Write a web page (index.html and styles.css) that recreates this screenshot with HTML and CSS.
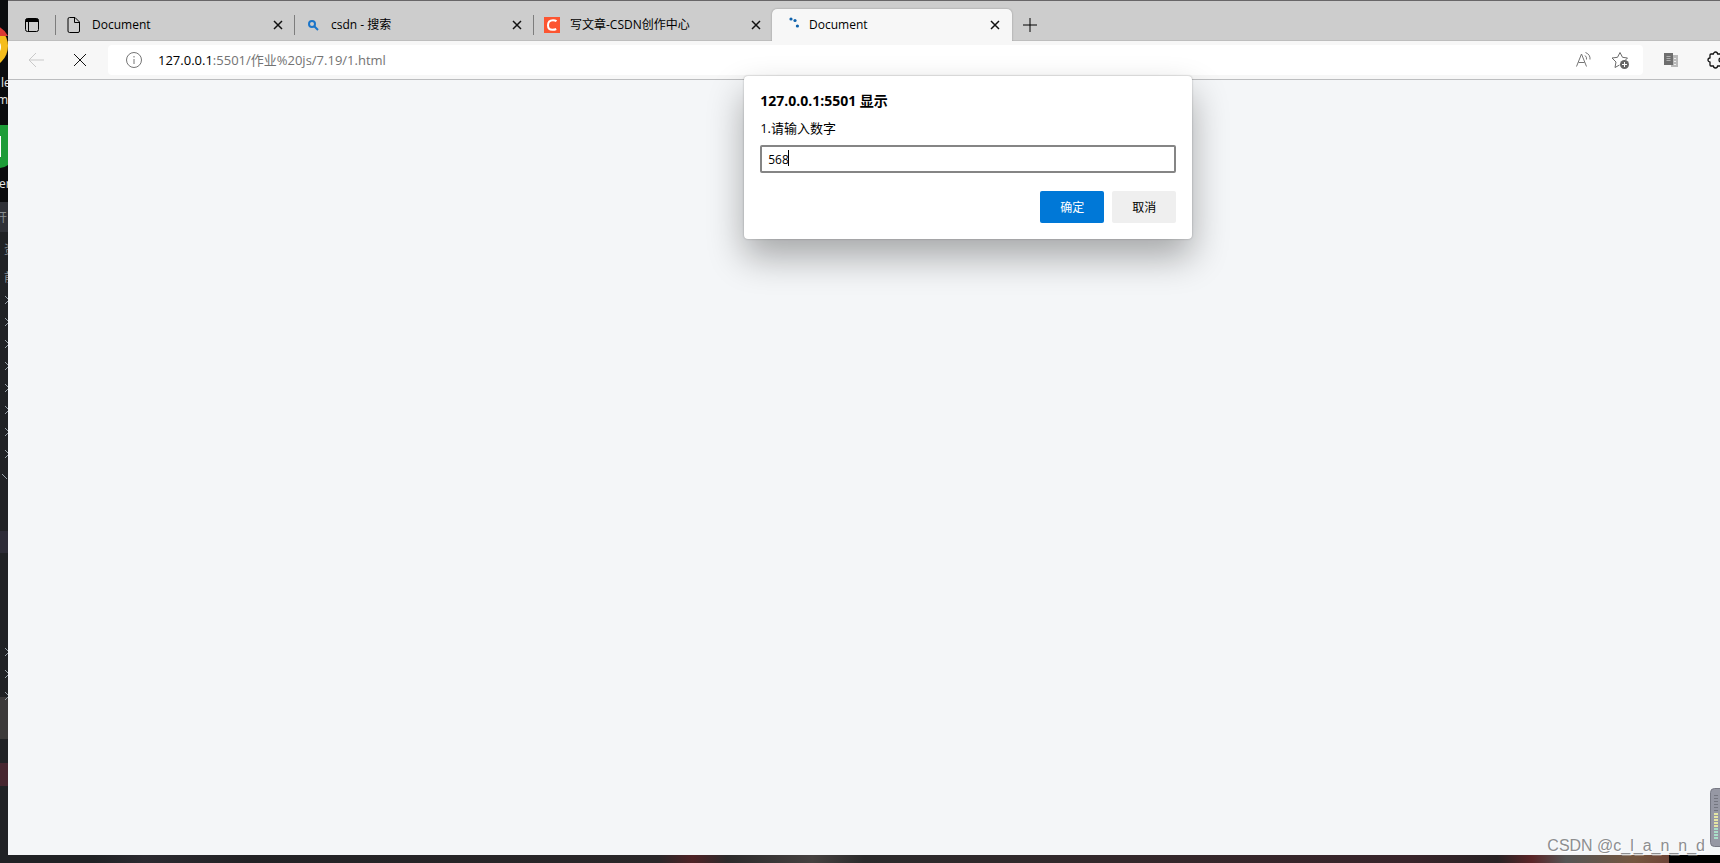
FILE: index.html
```
<!DOCTYPE html>
<html lang="zh-CN">
<head>
    <meta charset="UTF-8">
    <meta name="viewport" content="width=device-width, initial-scale=1.0">
    <title>Document</title>
    <link rel="stylesheet" href="styles.css">
</head>
<body>
    <div class="desktop">
        <svg class="desktop-left" width="8" height="863" aria-hidden="true">
            <rect width="8" height="863" fill="#0b0c0e" />
            <circle cx="-14" cy="46" r="22" fill="#f5bd1c" />
            <path d="M-14 24 A22 22 0 0 1 8 36 H-14z" fill="#dc3a34" />
            <circle cx="-8" cy="47" r="9" fill="#fff" />
            <path d="M0 125h8v40q-4 3-8 3z" fill="#1d9c38" />
            <path d="M0 136h1v21h-1z" fill="#fff" />
            <rect y="202" width="8" height="30" fill="#303238" />
            <rect y="232" width="8" height="631" fill="#202225" />
            <rect y="531" width="8" height="22" fill="#2d2c37" />
            <rect y="697" width="8" height="42" fill="#3c3a3a" />
            <rect y="763" width="8" height="23" fill="#46262f" />
            <g class="desktop-text">
                <text x="1" y="87">le</text>
                <text x="-3" y="104">me</text>
                <text x="-1" y="188">er</text>
            </g>
            <g class="desktop-text dim">
                <text x="-5" y="222">开</text>
                <text x="4" y="254">资</text>
                <text x="4" y="282">前</text>
            </g>
            <g fill="none" stroke="#9aa3ab">
                <path d="M5 296l4 4-4 4M5 318l4 4-4 4M5 340l4 4-4 4M5 362l4 4-4 4M5 384l4 4-4 4M5 406l4 4-4 4M5 428l4 4-4 4M5 450l4 4-4 4" />
                <path d="M2 474l5 5M5 648l4 4-4 4M5 670l4 4-4 4M5 692l4 4-4 4" />
            </g>
        </svg>

        <main class="window">
            <nav class="tabs" aria-label="标签页">
                <button class="tab-menu" aria-label="标签操作">
                    <svg width="16" height="16" viewBox="0 0 16 16">
                        <rect x="1.5" y="1.5" width="13" height="13" rx="2" fill="none" stroke="#000" />
                        <path d="M1.500 5V3.500a2 2 0 0 1 2-2h9a2 2 0 0 1 2 2V5z" />
                        <path d="M4.500 5v9" stroke="#000" />
                    </svg>
                </button>

                <div class="tab">
                    <span class="tab-icon">
                        <svg width="16" height="18" viewBox="0 0 16 18" fill="none" stroke="#000">
                            <path d="M3.500 1.500h5.500l4.500 4.500v9a1.500 1.500 0 0 1-1.500 1.500h-8.500a1.500 1.500 0 0 1-1.500-1.500v-12a1.500 1.500 0 0 1 1.500-1.500zM8.500 1.500v5h5" />
                        </svg>
                    </span>
                    <span class="tab-title">Document</span>
                    <button class="tab-close" aria-label="关闭标签页"><svg width="10" height="10"><path d="M1 1l8 8M9 1l-8 8" /></svg></button>
                </div>
                <div class="tab">
                    <span class="tab-icon">
                        <svg width="16" height="16" viewBox="0 0 16 16" fill="none" stroke="#1b75c9" stroke-width="2">
                            <circle cx="7" cy="7" r="3" /><path d="M9 9l4 4" />
                        </svg>
                    </span>
                    <span class="tab-title">csdn - 搜索</span>
                    <button class="tab-close" aria-label="关闭标签页"><svg width="10" height="10"><path d="M1 1l8 8M9 1l-8 8" /></svg></button>
                </div>
                <div class="tab">
                    <span class="tab-icon">
                        <svg width="16" height="16" viewBox="0 0 16 16">
                            <rect width="16" height="16" fill="#fc5531" />
                            <path d="M12.500 4.200Q11 3.200 9 3.200C6 3.200 4 5.200 4 8.200C4 11 5.700 12.800 8.400 12.800Q10.700 12.800 12.200 12" fill="none" stroke="#fff" stroke-width="2" />
                        </svg>
                    </span>
                    <span class="tab-title">写文章-CSDN创作中心</span>
                    <button class="tab-close" aria-label="关闭标签页"><svg width="10" height="10"><path d="M1 1l8 8M9 1l-8 8" /></svg></button>
                </div>
                <div class="tab active">
                    <span class="tab-icon">
                        <svg width="16" height="16" viewBox="0 0 16 16" fill="#0f62ac">
                            <circle cx="8" cy="2" r="1.600" /><circle cx="12" cy="3.500" r="1.600" /><circle cx="14.400" cy="9" r="1.600" />
                        </svg>
                    </span>
                    <span class="tab-title">Document</span>
                    <button class="tab-close" aria-label="关闭标签页"><svg width="10" height="10"><path d="M1 1l8 8M9 1l-8 8" /></svg></button>
                </div>

                <button class="tab-new" aria-label="新建标签页"><svg width="14" height="14"><path d="M7 0v14M0 7h14" stroke="#000" /></svg></button>
            </nav><!-- .tabs END -->

            <div class="toolbar">
                <button class="tool" aria-label="返回">
                    <svg width="16" height="16" fill="none" stroke="#c9c9c9"><path d="M16 8H1M8 1L1 8l7 7" /></svg>
                </button>
                <button class="tool" aria-label="停止">
                    <svg width="14" height="14" fill="none" stroke="#111"><path d="M1 1l12 12M13 1L1 13" /></svg>
                </button>
                <div class="address">
                    <svg width="18" height="18" viewBox="0 0 18 18" fill="none" stroke="#757575">
                        <circle cx="9" cy="9" r="7.500" /><path d="M9 8v5M9 5v1.500" />
                    </svg>
                    <a class="url" href="#"><span>127.0.0.1</span>:5501/作业%20js/7.19/1.html</a>
                    <button class="address-btn" aria-label="大声朗读">
                        <svg width="18" height="18" viewBox="0 0 18 18" fill="none" stroke="#757575">
                            <path d="M1.500 15.500L6.500 3l5 12.500M3.500 11.500h6" />
                            <path d="M10 4.500q2 1.500 1.500 4M10.500 1.500q5 2 4.500 7" />
                        </svg>
                    </button>
                    <button class="address-btn" aria-label="收藏">
                        <svg width="18" height="18" viewBox="0 0 18 18">
                            <path d="M8.500 14l-4.500 2.500 1-5.500-4-4 5.500-.700L9 1.500l2.500 4.800 5 .700-2 2" fill="none" stroke="#6b6b6b" stroke-linejoin="round" />
                            <circle cx="13.500" cy="13.500" r="4.500" fill="#666" />
                            <path d="M13.500 11v5M11 13.500h5" stroke="#fff" />
                        </svg>
                    </button>
                </div>
                <button class="tool" aria-label="翻译">
                    <svg width="14" height="14" viewBox="0 0 14 14">
                        <path d="M7 2h7v12H7z" fill="#b9b9b9" />
                        <path d="M10 5.500h2M10 8.500h2M10 11.500h2" stroke="#eee" />
                        <path d="M0 0h9v12H0z" fill="#6e6e6e" />
                        <path d="M2.500 3.500h4M2.500 5.500h4M2.500 7.500h4" stroke="#b0b0b0" />
                    </svg>
                </button>
                <button class="tool last" aria-label="管理扩展">
                    <svg width="18" height="18" viewBox="0 0 18 18" fill="none" stroke="#111" stroke-width="1.300" stroke-linejoin="round">
                        <path d="M4 3h2.500a2 2 0 0 1 4 0h3.500v4a2 2 0 1 0 0 4v4h-3.500a2 2 0 0 1-4 0H4a1 1 0 0 1-1-1v-3a2 2 0 0 1 0-4V4a1 1 0 0 1 1-1z" />
                    </svg>
                </button>
            </div><!-- .toolbar END -->

            <section class="page"></section>

            <form class="dialog" role="dialog">
                <h1>127.0.0.1:5501 显示</h1>
                <label for="answer">1.请输入数字</label>
                <div class="field">
                    <input id="answer" type="text" value="568">
                </div>
                <div class="buttons">
                    <button class="ok" type="button">确定</button>
                    <button type="button">取消</button>
                </div>
            </form>

            <svg class="meter" width="10" height="60" aria-hidden="true">
                <path d="M12 .500H4.500a4 4 0 0 0-4 4v50a4 4 0 0 0 4 4H12" fill="#9698a4" stroke="#777984" />
                <path d="M6 7v18" stroke="#747680" stroke-width="4" stroke-dasharray="1 2" />
                <path d="M6 25v15" stroke="#e4e5a4" stroke-width="4" stroke-dasharray="2 1" />
                <path d="M6 40v12" stroke="#a9dfc8" stroke-width="4" stroke-dasharray="2 1" />
            </svg>
            <p class="watermark">CSDN @c_l_a_n_n_d</p>
        </main><!-- .window END -->

        <div class="desktop-bottom"></div>
    </div>
</body>
</html>
```
FILE: styles.css
```
* {
    margin: 0;
    padding: 0;
    box-sizing: border-box;
}
body {
    font-family: "Open Sans", "Noto Sans CJK SC", sans-serif;
    font-size: 12px;
    color: #000;
    background-color: #202225;
}
button {
    border: none;
    background: none;
    font: inherit;
    color: inherit;
}
svg {
    display: block;
    flex: none;
}
.desktop {
    height: 100vh;
    display: grid;
    grid-template-columns: 8px minmax(0, 1fr);
    grid-template-rows: minmax(0, 1fr) 8px;
    overflow: hidden;
}
.desktop-left {
    grid-row: 1 / 3;
}
.desktop-text {
    fill: #e8e8e8;
    font-size: 12px;
}
.dim {
    fill: #8a8f94;
}
.desktop-bottom {
    background: linear-gradient(90deg, #202225 0 5%, #2b2a30 8%, #222225 14%, #2a2729 38%, #4e2225 40%, #2c2a2b 42%, #454140 47%, #2b2a2b 50%, #33282b 65%, #38242a 82%, #282224 87%, #5a2528 89%, #555 91%, #74563f 95%, #6e4538 97%, #000 97%);
}

.window {
    position: relative;
    display: flex;
    flex-direction: column;
    border-top: 1px solid #686668;
    background-color: #f4f6f8;
}

/* 标签栏 */
.tabs {
    display: flex;
    height: 40px;
    padding-top: 8px;
    background-color: #cdcdcd;
    border-bottom: 1px solid #bebebe;
}
.tab-menu {
    width: 47px;
    padding: 0 8px 0 16px;
}
.tab {
    position: relative;
    display: flex;
    align-items: center;
    width: 239px;
    padding: 0 11px;
}
.tab::before {
    /* 标签之间的分隔线 */
    content: '';
    position: absolute;
    left: 0;
    top: 6px;
    width: 1px;
    height: 20px;
    background-color: #7d7d7d;
}
.tab-icon {
    width: 16px;
    margin-right: 10px;
}
.tab-title {
    flex: 1;
    line-height: 16px;
    white-space: nowrap;
}
.tab-close {
    width: 10px;
}
.tab-close path {
    stroke: #111;
    stroke-width: 1.5;
}
.tab.active {
    width: 240px;
    height: 32px;
    padding-right: 12px;
    background-color: #f7f7f7;
    border-radius: 5px 5px 0 0;
    box-shadow: 0 0 2px rgba(0, 0, 0, 0.3);
    clip-path: inset(-3px -3px 0);
}
.tab.active::before {
    display: none;
}
.tab-new {
    padding: 0 11px;
}

/* 地址栏 */
.toolbar {
    display: flex;
    align-items: center;
    height: 39px;
    padding-left: 6px;
    background-color: #f7f7f7;
    border-bottom: 1px solid #bcbdbf;
}
.tool {
    display: flex;
    justify-content: center;
    width: 44px;
    flex: none;
}
.tool:nth-child(2) {
    margin-right: 6px;
}
.address {
    flex: 1;
    display: flex;
    align-items: center;
    height: 30px;
    padding: 0 14px 0 17px;
    background-color: #fff;
    border-radius: 4px;
}
.url {
    flex: 1;
    margin-left: 15px;
    font-size: 13px;
    line-height: 20px;
    color: #737373;
    text-decoration: none;
}
.url span {
    color: #000;
}
.address-btn {
    margin-left: 18px;
}
.address + .tool {
    width: 56px;
}
.last {
    width: 21px;
    justify-content: flex-start;
    padding-left: 8px;
    overflow: hidden;
}
.page {
    flex: 1;
}

/* prompt 弹窗 */
.dialog {
    position: absolute;
    top: 75px;
    left: 43%;
    width: 448px;
    padding: 15px 16px 16px;
    background-color: #fff;
    border-radius: 4px;
    box-shadow: 0 0 2px rgba(0, 0, 0, 0.3), 0 18px 36px rgba(0, 0, 0, 0.32);
}
.dialog h1 {
    font-size: 14px;
    line-height: 20px;
}
.dialog label {
    display: block;
    margin: 8px 0 7px;
    font-size: 13px;
    line-height: 19px;
}
.field {
    position: relative;
}
.field::after {
    /* 光标 */
    content: '';
    position: absolute;
    left: 28px;
    top: 5px;
    width: 1px;
    height: 16px;
    background-color: #000;
}
.field input {
    display: block;
    width: 100%;
    height: 28px;
    padding: 0 6px;
    border: 2px solid #858585;
    border-radius: 2px;
    outline: none;
    font: inherit;
}
.buttons {
    display: flex;
    justify-content: flex-end;
    gap: 8px;
    margin-top: 18px;
}
.buttons button {
    width: 64px;
    height: 32px;
    border-radius: 2px;
    background-color: #efefef;
}
.buttons .ok {
    background-color: #0078d7;
    color: #fff;
}

.meter {
    position: absolute;
    right: 0;
    bottom: 7px;
}
.watermark {
    position: absolute;
    right: 15px;
    bottom: 0;
    font-family: "Liberation Sans", sans-serif;
    font-size: 16px;
    line-height: 18px;
    color: #8d8e90;
    text-shadow: 1px 1px 0 #fff;
}
```
